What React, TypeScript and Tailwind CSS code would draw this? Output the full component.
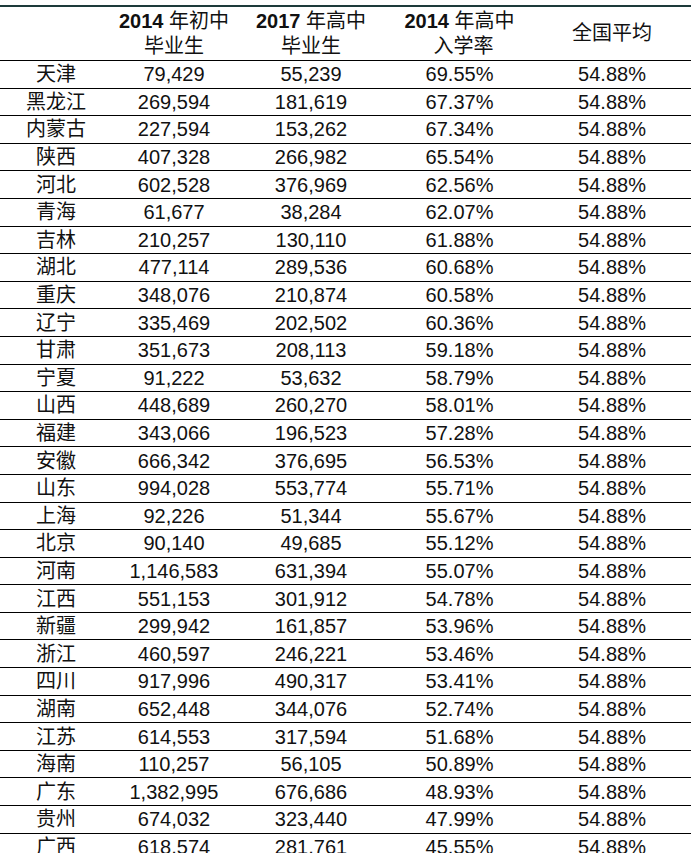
const rows: [string, string, string, string][] = [
  ["天津", "79,429", "55,239", "69.55%"],
  ["黑龙江", "269,594", "181,619", "67.37%"],
  ["内蒙古", "227,594", "153,262", "67.34%"],
  ["陕西", "407,328", "266,982", "65.54%"],
  ["河北", "602,528", "376,969", "62.56%"],
  ["青海", "61,677", "38,284", "62.07%"],
  ["吉林", "210,257", "130,110", "61.88%"],
  ["湖北", "477,114", "289,536", "60.68%"],
  ["重庆", "348,076", "210,874", "60.58%"],
  ["辽宁", "335,469", "202,502", "60.36%"],
  ["甘肃", "351,673", "208,113", "59.18%"],
  ["宁夏", "91,222", "53,632", "58.79%"],
  ["山西", "448,689", "260,270", "58.01%"],
  ["福建", "343,066", "196,523", "57.28%"],
  ["安徽", "666,342", "376,695", "56.53%"],
  ["山东", "994,028", "553,774", "55.71%"],
  ["上海", "92,226", "51,344", "55.67%"],
  ["北京", "90,140", "49,685", "55.12%"],
  ["河南", "1,146,583", "631,394", "55.07%"],
  ["江西", "551,153", "301,912", "54.78%"],
  ["新疆", "299,942", "161,857", "53.96%"],
  ["浙江", "460,597", "246,221", "53.46%"],
  ["四川", "917,996", "490,317", "53.41%"],
  ["湖南", "652,448", "344,076", "52.74%"],
  ["江苏", "614,553", "317,594", "51.68%"],
  ["海南", "110,257", "56,105", "50.89%"],
  ["广东", "1,382,995", "676,686", "48.93%"],
  ["贵州", "674,032", "323,440", "47.99%"],
  ["广西", "618,574", "281,761", "45.55%"],
]

const cols = "grid grid-cols-[112px_124px_150px_147px_158px]"

export default function App() {
  return (
    <div
      className="min-h-screen bg-white pt-[5px] text-[#111]"
      style={{ fontFamily: '"Liberation Sans", Arial, "Noto Sans CJK SC", sans-serif' }}
    >
      <div className="w-[691px]">
        {/* Header */}
        <div className={`${cols} h-[56px] border-t-2 border-b border-t-[#1d3a3a] border-b-black text-[20px] leading-[25px]`}>
          <div />
          <div className="flex flex-col items-center justify-center">
            <span className="font-bold">
              2014 <span className="font-normal">年初中</span>
            </span>
            <span>毕业生</span>
          </div>
          <div className="flex flex-col items-center justify-center">
            <span className="font-bold">
              2017 <span className="font-normal">年高中</span>
            </span>
            <span>毕业生</span>
          </div>
          <div className="flex flex-col items-center justify-center">
            <span className="font-bold">
              2014 <span className="font-normal">年高中</span>
            </span>
            <span className="pl-2">入学率</span>
          </div>
          <div className="flex items-center justify-center">全国平均</div>
        </div>

        {/* Rows */}
        {rows.map(([name, grad14, grad17, rate]) => (
          <div
            key={name}
            className={`${cols} h-[27.6px] items-center border-b border-black text-[20px] leading-none`}
          >
            <div className="text-center">{name}</div>
            <div className="text-center">{grad14}</div>
            <div className="text-center">{grad17}</div>
            <div className="text-center">{rate}</div>
            <div className="text-center">54.88%</div>
          </div>
        ))}
      </div>
    </div>
  )
}
